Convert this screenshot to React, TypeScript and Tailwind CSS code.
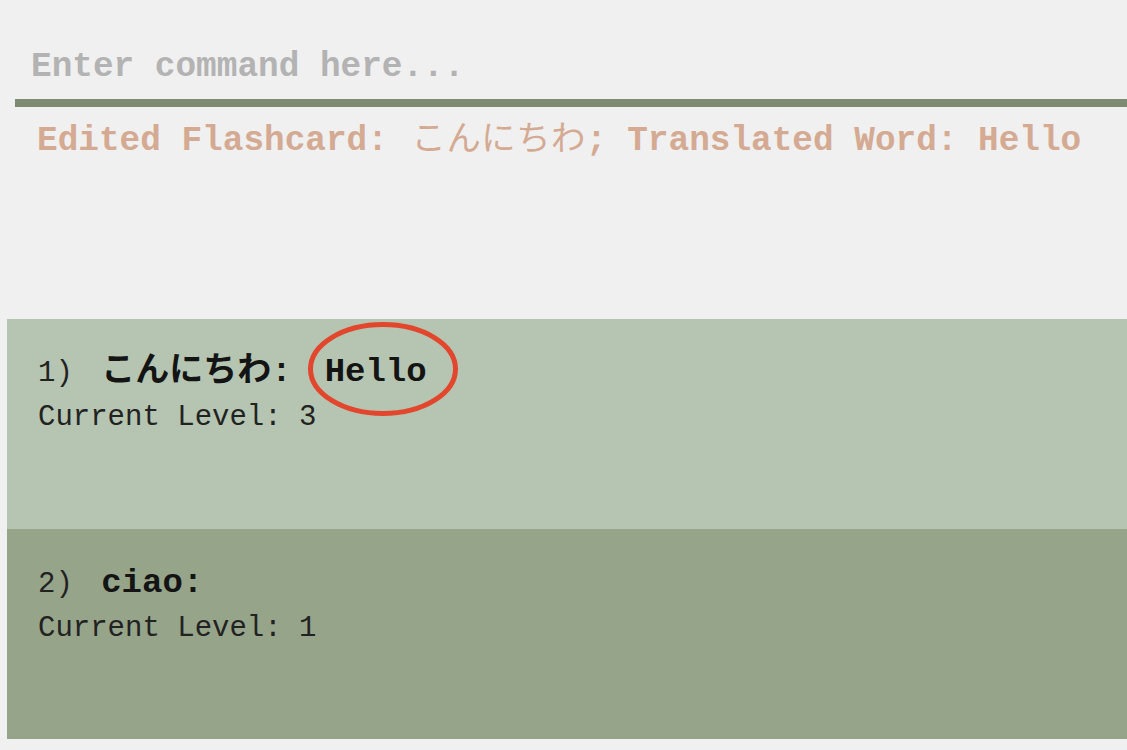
import React from "react";

const MONO = "font-['Liberation_Mono','Noto_Sans_CJK_JP',monospace]";

type Card = {
  index: number;
  word: string;
  translation?: string;
  level: number;
  circled?: boolean;
};

const CARDS: Card[] = [
  { index: 1, word: "こんにちわ", translation: "Hello", level: 3, circled: true },
  { index: 2, word: "ciao", level: 1 },
];

function FlashcardRow({ card, even }: { card: Card; even: boolean }) {
  return (
    <div
      className={`relative h-[210px] pl-[31px] ${even ? "bg-[#96a48a] pt-[34px]" : "bg-[#b5c5b1] pt-[33px]"}`}
    >
      {/* 番号 + 単語 */}
      <div className="flex h-[40px] items-baseline leading-[40px] text-[#141414]">
        <span className="whitespace-pre text-[29px] text-[#222]">{card.index}) </span>
        <span className="ml-[11px] whitespace-pre text-[34px] font-bold">
          {card.word}:
        </span>
        {card.translation && (
          <span className="ml-[33px] text-[34px] font-bold">{card.translation}</span>
        )}
      </div>
      <div className="mt-[8px] h-[36px] whitespace-pre text-[29px] leading-[36px] text-[#222]">
        Current Level: {card.level}
      </div>

      {/* 赤丸の注記 */}
      {card.circled && (
        <svg
          className="absolute left-[300px] top-[2px]"
          width="152"
          height="96"
          viewBox="0 0 152 96"
          fill="none"
        >
          <ellipse cx="76" cy="48" rx="72.5" ry="44.5" stroke="#e2462d" strokeWidth="5" />
        </svg>
      )}
    </div>
  );
}

export default function App() {
  return (
    <div className={`h-[750px] w-full overflow-hidden bg-[#f0f0f0] ${MONO}`}>
      {/* コマンド入力 */}
      <div className="pl-[15px] pt-[47px]">
        <input
          readOnly
          placeholder="Enter command here..."
          className="block h-[40px] w-full bg-transparent pl-[16px] text-[34.4px] font-bold leading-[40px] text-[#333] outline-none placeholder:text-[#b3b3b3]"
        />
        <div className="mt-[12px] h-[8px] bg-[#7c8b72]" />
      </div>

      {/* 結果表示 */}
      <div className="mt-[14px] h-[40px] whitespace-pre pl-[37px] text-[34.4px] font-bold leading-[40px] text-[#d4aa93]">
        Edited Flashcard: <span className="ml-[3px] font-normal tracking-[0.5px]">こんにちわ</span>; Translated Word: Hello
      </div>

      {/* フラッシュカード一覧 */}
      <div className="ml-[7px] mt-[158px]">
        {CARDS.map((c, i) => (
          <FlashcardRow key={c.index} card={c} even={i % 2 === 1} />
        ))}
      </div>
    </div>
  );
}
